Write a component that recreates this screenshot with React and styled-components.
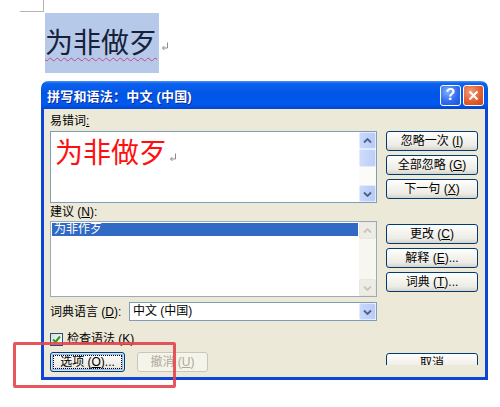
import React from 'react';
import styled, { createGlobalStyle, css } from 'styled-components';

const GlobalStyle = createGlobalStyle`
  html, body { margin: 0; padding: 0; background: #fff; }
  body { font-family: "Liberation Sans", "Noto Sans CJK SC", sans-serif; }
`;

const Page = styled.div`
  position: relative;
  width: 500px;
  height: 407px;
  overflow: hidden;
  background: #fff;
`;

/* ---------- document behind the dialog ---------- */
const DocArea = styled.div`
  height: 81px;
  display: flex;
  flex-direction: column;
`;

const CornerMark = styled.div`
  margin-left: 20px;
  width: 23px;
  height: 11px;
  border-right: 1px solid #b4b4b4;
  border-bottom: 1px solid #b4b4b4;
`;

const DocLine = styled.div`
  margin: 1px 0 0 45px;
  display: flex;
  align-items: flex-end;
`;

const Selected = styled.span`
  display: inline-block;
  height: 60px;
  width: 114px;
  background: #b6c9e9;
  font-family: "Noto Sans CJK SC", sans-serif;
  font-size: 28px;
  line-height: 56px;
  color: #16213a;
  white-space: nowrap;
  text-decoration: underline wavy #c2488c;
  text-decoration-thickness: 1px;
  text-underline-offset: 4px;
`;

const Pilcrow = styled.svg`
  width: 8px;
  height: 9px;
  margin: 0 0 ${(p) => p.$bottom || 22}px 2px;
  flex: none;
`;

const ReturnMark = ({ bottom }) => (
  <Pilcrow $bottom={bottom} viewBox="0 0 8 9">
    <path d="M6.5 0.5 V6 H1.5 M3.5 4 L1.5 6 L3.5 8" fill="none" stroke="#8a8a8a" strokeWidth="1" />
  </Pilcrow>
);

/* ---------- dialog frame ---------- */
const Dialog = styled.div`
  margin-left: 41px;
  width: 447px;
  display: flex;
  flex-direction: column;
`;

const TitleBar = styled.div`
  height: 28px;
  box-sizing: border-box;
  border-radius: 7px 7px 0 0;
  background: linear-gradient(180deg, #4a93fa 0%, #0d62ee 9%, #0055e5 45%, #0159ee 82%, #0046d0 100%);
  display: flex;
  align-items: center;
  padding: 0 4px 0 6px;
  gap: 2px;
`;

const Title = styled.span`
  flex: 1;
  color: #fff;
  font-size: 13px;
  font-weight: bold;
  font-family: "Liberation Sans", "Noto Sans CJK SC", sans-serif;
  text-shadow: 1px 1px #0a2a9c;
  letter-spacing: 0.2px;
`;

const TitleButton = styled.div`
  width: 21px;
  height: 21px;
  box-sizing: border-box;
  border: 1px solid #fff;
  border-radius: 3px;
  display: flex;
  align-items: center;
  justify-content: center;
  color: #fff;
  font-weight: bold;
  font-size: 16px;
  font-family: "Liberation Sans", sans-serif;
  background: ${(p) =>
    p.$close
      ? 'radial-gradient(circle at 35% 30%, #f29c7c 0%, #e3602f 55%, #c8421c 100%)'
      : 'radial-gradient(circle at 35% 30%, #7fb0fb 0%, #2f6df0 55%, #1b4fd8 100%)'};
`;

const Body = styled.div`
  background: #ece9d8;
  border: 3px solid #0c45d8;
  border-top: none;
  padding: 5px 7px 5px 6px;
  display: flex;
  flex-direction: column;
  font-size: 12px;
  color: #000;
`;

const Section = styled.div`
  display: grid;
  grid-template-columns: 327px 92px;
  column-gap: 9px;
  margin-top: ${(p) => p.$top || 0}px;
`;

const Label = styled.div`
  height: 14px;
  line-height: 14px;
  font-size: 12px;
  white-space: nowrap;
  margin-top: ${(p) => p.$top || 0}px;
  width: ${(p) => (p.$w ? `${p.$w}px` : 'auto')};
`;

const ButtonCol = styled.div`
  display: flex;
  flex-direction: column;
  gap: 4px;
  margin-top: ${(p) => p.$top || 0}px;
`;

/* ---------- controls ---------- */
const Button = styled.div`
  width: ${(p) => p.$w || 92}px;
  height: 20px;
  box-sizing: border-box;
  border: 1px solid #003c74;
  border-radius: 3px;
  background: linear-gradient(180deg, #ffffff 0%, #f6f5f0 35%, #ecebe5 75%, #d8d3c8 100%);
  display: flex;
  align-items: center;
  justify-content: center;
  font-size: 12px;
  line-height: 14px;
  white-space: nowrap;
  color: #000;
  ${(p) =>
    p.$focused &&
    css`
      box-shadow: inset 0 0 0 1px #cee7ff, inset 0 0 0 2px #98b8ea;
      outline: 1px dotted #000;
      outline-offset: -4px;
    `}
  ${(p) =>
    p.$disabled &&
    css`
      border-color: #c9c7ba;
      background: #f5f4ea;
      color: #aca899;
    `}
`;

const Clip = styled.div`
  height: ${(p) => p.$h}px;
  overflow: hidden;
  margin-top: ${(p) => p.$top || 0}px;
`;

const Field = styled.div`
  box-sizing: border-box;
  width: 327px;
  height: ${(p) => p.$h}px;
  border: 1px solid ${(p) => p.$border || '#7f9db9'};
  background: #fff;
  display: flex;
`;

const FieldContent = styled.div`
  flex: 1;
  min-width: 0;
  padding: ${(p) => p.$pad || '0'};
`;

const BigWord = styled.div`
  display: flex;
  align-items: flex-end;
  font-family: "Noto Sans CJK SC", sans-serif;
  font-size: 28px;
  line-height: 34px;
  color: #ff1010;
  white-space: nowrap;
`;

const ListRow = styled.div`
  height: 13px;
  line-height: 13px;
  padding-left: 2px;
  background: ${(p) => (p.$selected ? '#316ac5' : 'transparent')};
  color: ${(p) => (p.$selected ? '#fff' : '#000')};
  font-size: 12px;
`;

const ScrollBar = styled.div`
  width: 17px;
  display: flex;
  flex-direction: column;
  background: ${(p) => (p.$disabled ? '#f7f6f1' : '#fbfbf8')};
`;

const ScrollButton = styled.div`
  height: 17px;
  box-sizing: border-box;
  border: 1px solid ${(p) => (p.$disabled ? '#e8e7df' : '#e3ebfd')};
  border-radius: 2px;
  background: ${(p) => (p.$disabled ? '#eeede5' : 'linear-gradient(90deg, #c9d8fc, #b7cbf7)')};
  display: flex;
  align-items: center;
  justify-content: center;
`;

const Thumb = styled.div`
  height: 18px;
  box-sizing: border-box;
  border: 1px solid #e3ebfd;
  border-radius: 2px;
  background: linear-gradient(90deg, #cddbfc, #bccff8);
`;

const Track = styled.div`
  flex: 1;
`;

const Arrow = ({ down, disabled }) => (
  <svg width="9" height="6" viewBox="0 0 9 6">
    <path
      d={down ? 'M1 1.5 L4.5 5 L8 1.5' : 'M1 4.5 L4.5 1 L8 4.5'}
      fill="none"
      stroke={disabled ? '#c9c7ba' : '#4d6185'}
      strokeWidth="1.8"
    />
  </svg>
);

const Scroll = ({ disabled, thumb }) => (
  <ScrollBar $disabled={disabled}>
    <ScrollButton $disabled={disabled}>
      <Arrow disabled={disabled} />
    </ScrollButton>
    {thumb && <Thumb />}
    <Track />
    <ScrollButton $disabled={disabled}>
      <Arrow down disabled={disabled} />
    </ScrollButton>
  </ScrollBar>
);

const ComboRow = styled.div`
  display: flex;
  align-items: center;
  gap: 4px;
  margin-top: 5px;
`;

const Combo = styled.div`
  box-sizing: border-box;
  width: 248px;
  height: 19px;
  border: 1px solid #7f9db9;
  background: #fff;
  display: flex;
  align-items: stretch;
`;

const ComboText = styled.div`
  flex: 1;
  padding-left: 3px;
  line-height: 17px;
  font-size: 12px;
`;

const ComboButton = styled(ScrollButton)`
  width: 17px;
  height: auto;
`;

const CheckRow = styled.div`
  display: flex;
  align-items: center;
  gap: 4px;
  margin-top: 11px;
  height: 14px;
`;

const CheckBox = styled.div`
  width: 13px;
  height: 13px;
  box-sizing: border-box;
  border: 1px solid #1c5180;
  background: linear-gradient(135deg, #dcdcd7, #ffffff);
  display: flex;
  align-items: center;
  justify-content: center;
`;

const BottomRow = styled.div`
  display: grid;
  grid-template-columns: 327px 92px;
  column-gap: 9px;
  margin-top: 6px;
`;

const LeftButtons = styled.div`
  display: flex;
  gap: 12px;
`;

const Annotation = styled.div`
  position: absolute;
  left: 13px;
  top: 342px;
  width: 163px;
  height: 46px;
  box-sizing: border-box;
  border: 3px solid rgba(228, 66, 76, 0.9);
  border-radius: 2px;
  pointer-events: none;
`;

export default function App() {
  return (
    <Page>
      <GlobalStyle />
      <DocArea>
        <CornerMark />
        <DocLine>
          <Selected>为非做歹</Selected>
          <ReturnMark bottom={22} />
        </DocLine>
      </DocArea>

      <Dialog>
        <TitleBar>
          <Title>拼写和语法：中文 (中国)</Title>
          <TitleButton>?</TitleButton>
          <TitleButton $close>
            <svg width="11" height="11" viewBox="0 0 11 11">
              <path d="M1.5 1.5 L9.5 9.5 M9.5 1.5 L1.5 9.5" stroke="#fff" strokeWidth="2.2" />
            </svg>
          </TitleButton>
        </TitleBar>

        <Body>
          <Label>
            易错词<u>:</u>
          </Label>
          <Section $top={3}>
            <Field $h={72}>
              <FieldContent $pad="2px 4px">
                <BigWord>
                  为非做歹
                  <ReturnMark bottom={6} />
                </BigWord>
              </FieldContent>
              <Scroll thumb />
            </Field>
            <ButtonCol>
              <Button>
                忽略一次 (<u>I</u>)
              </Button>
              <Button>
                全部忽略 (<u>G</u>)
              </Button>
              <Button>
                下一句 (<u>X</u>)
              </Button>
            </ButtonCol>
          </Section>

          <Label $top={2}>
            建议 (<u>N</u>):
          </Label>
          <Section $top={2}>
            <Field $h={76} $border="#9aa9bb">
              <FieldContent $pad="1px">
                <ListRow $selected>为非作歹</ListRow>
              </FieldContent>
              <Scroll disabled />
            </Field>
            <ButtonCol $top={3}>
              <Button>
                更改 (<u>C</u>)
              </Button>
              <Button>
                解释 (<u>E</u>)...
              </Button>
              <Button>
                词典 (<u>T</u>)...
              </Button>
            </ButtonCol>
          </Section>

          <ComboRow>
            <Label $w={75}>
              词典语言 (<u>D</u>):
            </Label>
            <Combo>
              <ComboText>中文 (中国)</ComboText>
              <ComboButton>
                <Arrow down />
              </ComboButton>
            </Combo>
          </ComboRow>

          <CheckRow>
            <CheckBox>
              <svg width="9" height="9" viewBox="0 0 9 9">
                <path d="M1 4.5 L3.5 7 L8 1.5" fill="none" stroke="#21a121" strokeWidth="2" />
              </svg>
            </CheckBox>
            <Label>
              检查语法 (<u>K</u>)
            </Label>
          </CheckRow>

          <BottomRow>
            <LeftButtons>
              <Button $w={75} $focused>
                选项 (<u>O</u>)...
              </Button>
              <Button $w={71} $disabled>
                撤消 (<u>U</u>)
              </Button>
            </LeftButtons>
            <Clip $h={12} $top={1}>
              <Button>取消</Button>
            </Clip>
          </BottomRow>
        </Body>
      </Dialog>

      <Annotation />
    </Page>
  );
}
